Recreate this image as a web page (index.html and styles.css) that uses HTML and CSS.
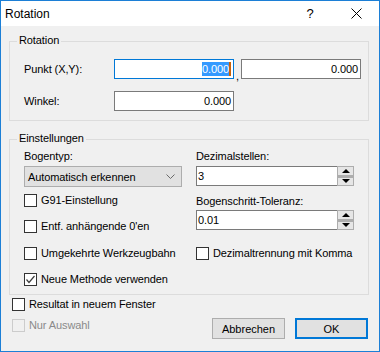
FILE: index.html
```html
<!DOCTYPE html>
<html lang="de">
<head>
    <meta charset="UTF-8">
    <meta name="viewport" content="width=device-width, initial-scale=1.0">
    <title>Rotation</title>
    <link rel="stylesheet" href="styles.css">
</head>
<body>
    <div class="window">
        <div class="titlebar">
            <span class="title">Rotation</span>
            <span class="tb-btn tb-help">?</span>
            <span class="tb-btn">
                <svg width="11" height="11" viewBox="0 0 11 11"><path d="M0.5 0.5 L10.5 10.5 M10.5 0.5 L0.5 10.5" stroke="#000" stroke-width="1" fill="none"/></svg>
            </span>
        </div>

        <div class="content">
            <div class="group group-rotation">
                <span class="group-title">Rotation</span>
                <div class="rot-grid">
                    <span class="row-label">Punkt (X,Y):</span>
                    <div class="edit edit-focus"><span class="selected">0.000</span></div>
                    <span class="comma">,</span>
                    <div class="edit">0.000</div>
                    <span class="row-label">Winkel:</span>
                    <div class="edit">0.000</div>
                </div>
            </div>

            <div class="group group-settings">
                <span class="group-title">Einstellungen</span>
                <div class="two-cols">
                    <div class="col">
                        <div class="field-label">Bogentyp:</div>
                        <div class="combo">
                            <span>Automatisch erkennen</span>
                            <svg width="9" height="5" viewBox="0 0 9 5"><path d="M0.5 0.5 L4.5 4.5 L8.5 0.5" stroke="#6a6a6a" stroke-width="1" fill="none"/></svg>
                        </div>
                        <div class="check check-g91"><span class="box"></span>G91-Einstellung</div>
                        <div class="check check-entf"><span class="box"></span>Entf. anhängende 0'en</div>
                    </div>
                    <div class="col">
                        <div class="field-label">Dezimalstellen:</div>
                        <div class="spin">
                            <div class="spin-edit">3</div>
                            <div class="spin-btns">
                                <span class="spin-btn"><span class="arrow-up"></span></span>
                                <span class="spin-btn"><span class="arrow-down"></span></span>
                            </div>
                        </div>
                        <div class="field-label label-tol">Bogenschritt-Toleranz:</div>
                        <div class="spin">
                            <div class="spin-edit">0.01</div>
                            <div class="spin-btns">
                                <span class="spin-btn"><span class="arrow-up"></span></span>
                                <span class="spin-btn"><span class="arrow-down"></span></span>
                            </div>
                        </div>
                    </div>
                </div>
                <div class="two-cols check-row">
                    <div class="check"><span class="box"></span>Umgekehrte Werkzeugbahn</div>
                    <div class="check"><span class="box"></span>Dezimaltrennung mit Komma</div>
                </div>
                <div class="check check-row">
                    <span class="box">
                        <svg width="11" height="11" viewBox="0 0 11 11"><path d="M1.5 5.5 L4 8.5 L9.5 2" stroke="#3c3c3c" stroke-width="1.2" fill="none"/></svg>
                    </span>Neue Methode verwenden
                </div>
            </div>

            <div class="bottom">
                <div class="bottom-checks">
                    <div class="check"><span class="box"></span>Resultat in neuem Fenster</div>
                    <div class="check disabled"><span class="box"></span>Nur Auswahl</div>
                </div>
                <div class="buttons">
                    <button class="btn">Abbrechen</button>
                    <button class="btn btn-default">OK</button>
                </div>
            </div>
        </div>
    </div>
</body>
</html>
```

FILE: styles.css
```css
body {
    margin: 0;
    padding: 0;
    font-family: "Liberation Sans", Arial, sans-serif;
    font-size: 11px;
    letter-spacing: -0.1px;
    color: #000;
    background-color: #f0f0f0;
}
.window {
    width: 380px;
    height: 352px;
    box-sizing: border-box;
    border: 1px solid #1c7fd6;
    background-color: #f0f0f0;
    display: flex;
    flex-direction: column;
}
.titlebar {
    height: 25px;
    background-color: #fff;
    display: flex;
    align-items: center;
}
.title {
    flex: 1;
    padding-left: 4px;
    font-size: 12px;
    letter-spacing: 0;
}
.tb-btn {
    width: 46px;
    height: 25px;
    display: flex;
    align-items: center;
    justify-content: center;
}
.tb-help {
    font-size: 13px;
}
.content {
    flex: 1;
}
.group {
    position: relative;
    margin-left: 8px;
    width: 360px;
    box-sizing: border-box;
    border: 1px solid #dcdcdc;
}
.group-title {
    position: absolute;
    top: -8px;
    left: 7px;
    padding: 0 2px;
    line-height: 13px;
    background-color: #f0f0f0;
}
.group-rotation {
    margin-top: 15px;
    height: 80px;
    padding: 17px 0 0 14px;
}
.rot-grid {
    display: grid;
    grid-template-columns: 90px 120px 7px 120px;
    grid-template-rows: 20px 20px;
    row-gap: 12px;
    align-items: center;
}
.row-label {
    line-height: 13px;
}
.edit {
    height: 20px;
    box-sizing: border-box;
    border: 1px solid #7a7a7a;
    background-color: #fff;
    text-align: right;
    padding: 0 2px;
    line-height: 18px;
}
.edit-focus {
    border-color: #0078d7;
}
.selected {
    background-color: #3399ff;
    color: #fff;
    border-right: 2px solid #c8620a;
    padding: 1px 0;
}
.comma {
    align-self: end;
    line-height: 13px;
    margin-bottom: -4px;
    padding-left: 2px;
}
.group-settings {
    margin-top: 18px;
    height: 156px;
    padding: 10px 0 0 14px;
}
.two-cols {
    display: grid;
    grid-template-columns: 158px 158px;
    column-gap: 14px;
}
.col {
    display: flex;
    flex-direction: column;
}
.field-label {
    line-height: 13px;
    height: 13px;
    margin-bottom: 3px;
}
.label-tol {
    margin-top: 9px;
    margin-bottom: 2px;
}
.combo {
    height: 21px;
    box-sizing: border-box;
    border: 1px solid #adadad;
    background-color: #e1e1e1;
    padding: 0 6px 0 3px;
    display: flex;
    align-items: center;
    justify-content: space-between;
}
.spin {
    height: 20px;
    display: flex;
}
.spin-edit {
    flex: 1;
    box-sizing: border-box;
    border: 1px solid #7a7a7a;
    border-right: none;
    background-color: #fff;
    padding-left: 1px;
    line-height: 18px;
}
.spin-btns {
    width: 17px;
    display: flex;
    flex-direction: column;
}
.spin-btn {
    flex: 1;
    box-sizing: border-box;
    border: 1px solid #adadad;
    background-color: #e6e6e6;
    display: flex;
    align-items: center;
    justify-content: center;
}
.spin-btn + .spin-btn {
    border-top: 2px solid #adadad;
}
.arrow-up {
    width: 0;
    height: 0;
    border-left: 4px solid transparent;
    border-right: 4px solid transparent;
    border-bottom: 4px solid #000;
}
.arrow-down {
    width: 0;
    height: 0;
    border-left: 4px solid transparent;
    border-right: 4px solid transparent;
    border-top: 4px solid #000;
}
.check {
    display: flex;
    align-items: center;
    gap: 4px;
    height: 13px;
    line-height: 13px;
    white-space: nowrap;
}
.box {
    flex: none;
    width: 13px;
    height: 13px;
    box-sizing: border-box;
    border: 1px solid #333;
    background-color: #fff;
    display: flex;
    align-items: center;
    justify-content: center;
}
.check-g91 {
    margin-top: 7px;
}
.check-entf {
    margin-top: 13px;
}
.check-row {
    margin-top: 14px;
}
.check-row + .check-row {
    margin-top: 13px;
}
.disabled {
    color: #8a8a8a;
}
.disabled .box {
    border-color: #cccccc;
    background-color: #f0f0f0;
}
.bottom {
    display: flex;
    justify-content: space-between;
    padding: 3px 11px 0 11px;
}
.bottom-checks {
    display: flex;
    flex-direction: column;
    gap: 8px;
}
.buttons {
    display: flex;
    gap: 10px;
    margin-top: 20px;
}
.btn {
    width: 73px;
    height: 21px;
    box-sizing: border-box;
    border: 1px solid #adadad;
    background-color: #e1e1e1;
    font-family: "Liberation Sans", Arial, sans-serif;
    font-size: 11px;
    color: #000;
    padding: 0;
}
.btn-default {
    border: 2px solid #0078d7;
}
```
